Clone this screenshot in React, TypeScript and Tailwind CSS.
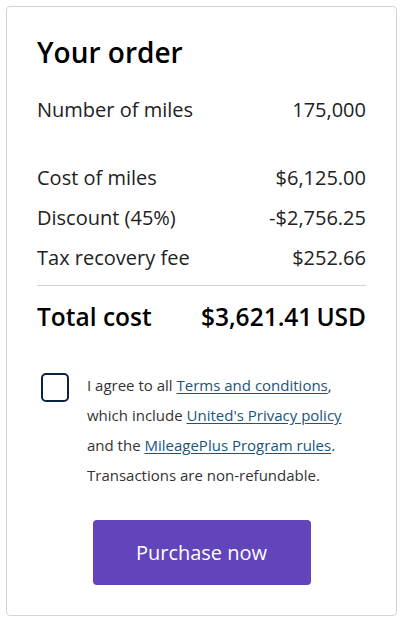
import React from "react";

const Row = ({ label, value }: { label: string; value: string }) => (
  <div className="flex justify-between items-center h-[40px] text-[20px] text-[#222]">
    <span>{label}</span>
    <span>{value}</span>
  </div>
);

export default function App() {
  return (
    <div className="pl-[6px] pr-[5px] pt-[6px] bg-white" style={{ fontFamily: '"Open Sans", sans-serif' }}>
      <div className="w-[391px] h-[610px] border border-[#d4d4d4] rounded-[4px] px-[30px] pt-[26px] bg-white">
        <h1 className="text-[28px] leading-[38px] font-semibold text-black">Your order</h1>
        <div className="mt-[19px]">
          <Row label="Number of miles" value="175,000" />
        </div>
        <div className="mt-[28px]">
          <Row label="Cost of miles" value="$6,125.00" />
          <Row label="Discount (45%)" value="-$2,756.25" />
          <Row label="Tax recovery fee" value="$252.66" />
        </div>
        <div className="mt-[7px] h-px bg-[#d0d0d0]" />
        <div className="mt-[15px] flex justify-between items-center h-[32px] text-[24.5px] font-semibold text-black">
          <span>Total cost</span>
          <span>$3,621.41<span className="ml-[4px]">USD</span></span>
        </div>
        <div className="mt-[37px] flex">
          <div className="ml-[4px] mt-[3px] w-[28px] h-[29px] shrink-0 border-2 border-[#0c2340] rounded-[5px]" />
          <p className="ml-[18px] text-[15px] leading-[30px] text-[#333]">
            I agree to all{" "}
            <a className="underline text-[#215476] underline-offset-2">Terms and conditions</a>,
            <br />
            which include{" "}
            <a className="underline text-[#215476] underline-offset-2">United's Privacy policy</a>
            <br />
            and the{" "}
            <a className="underline text-[#215476] underline-offset-2">MileagePlus Program rules</a>.
            <br />
            Transactions are non-refundable.
          </p>
        </div>
        <div className="mt-[30px] flex justify-center">
          <button className="w-[218px] h-[65px] bg-[#6244bb] rounded-[4px] text-white text-[20px]">
            Purchase now
          </button>
        </div>
      </div>
    </div>
  );
}
